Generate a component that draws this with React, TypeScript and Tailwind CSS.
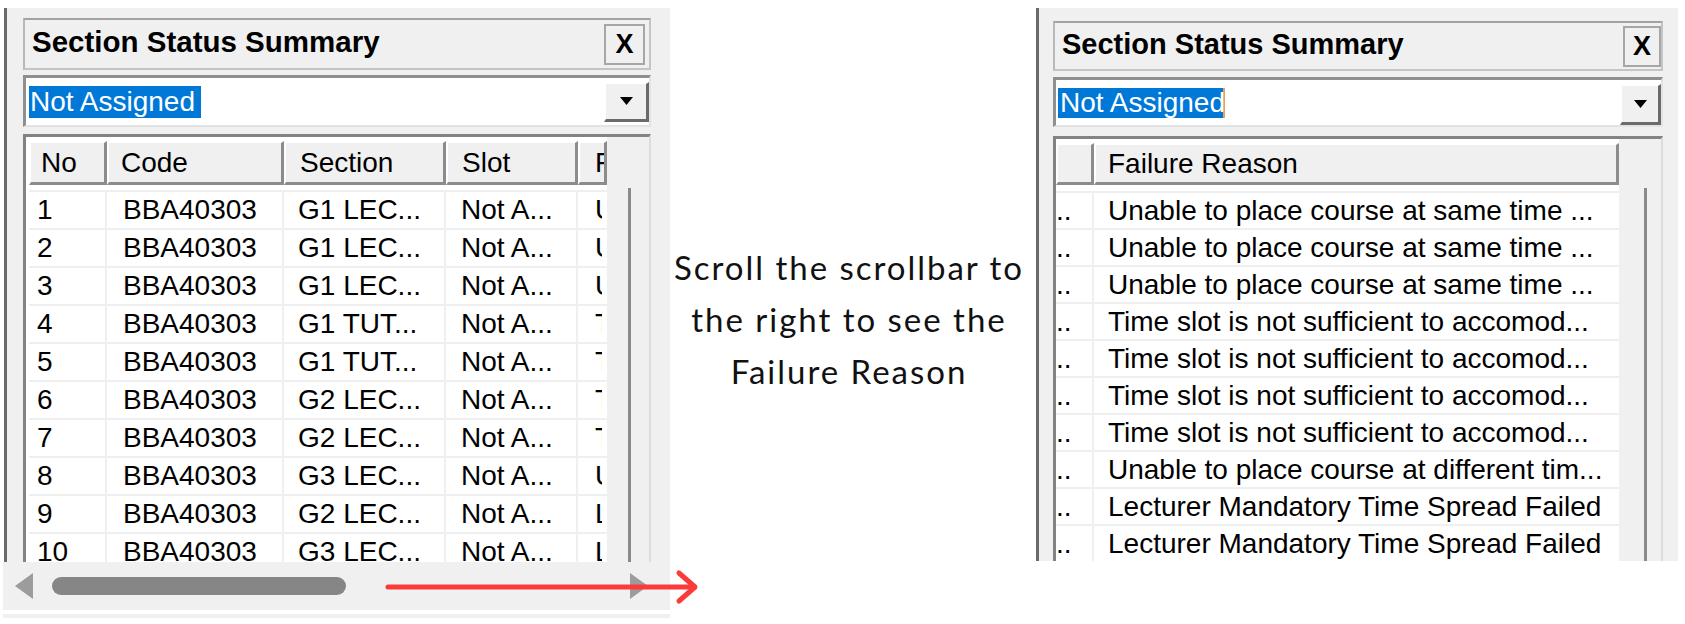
import React from "react";

const leftRows: string[][] = [
  ["1", "BBA40303", "G1 LEC...", "Not A...", "Unable"],
  ["2", "BBA40303", "G1 LEC...", "Not A...", "Unable"],
  ["3", "BBA40303", "G1 LEC...", "Not A...", "Unable"],
  ["4", "BBA40303", "G1 TUT...", "Not A...", "Time"],
  ["5", "BBA40303", "G1 TUT...", "Not A...", "Time"],
  ["6", "BBA40303", "G2 LEC...", "Not A...", "Time"],
  ["7", "BBA40303", "G2 LEC...", "Not A...", "Time"],
  ["8", "BBA40303", "G3 LEC...", "Not A...", "Unable"],
  ["9", "BBA40303", "G2 LEC...", "Not A...", "Lecturer"],
  ["10", "BBA40303", "G3 LEC...", "Not A...", "Lecturer"],
];

const reasons: string[] = [
  "Unable to place course at same time ...",
  "Unable to place course at same time ...",
  "Unable to place course at same time ...",
  "Time slot is not sufficient to accomod...",
  "Time slot is not sufficient to accomod...",
  "Time slot is not sufficient to accomod...",
  "Time slot is not sufficient to accomod...",
  "Unable to place course at different tim...",
  "Lecturer Mandatory Time Spread Failed",
  "Lecturer Mandatory Time Spread Failed",
  "",
];

const LCOLS = [
  { w: "w-[78px]", hp: "pl-[10px]", bp: "pl-[8px]", label: "No", border: true },
  { w: "w-[177px]", hp: "pl-[12px]", bp: "pl-[16px]", label: "Code", border: true },
  { w: "w-[162px]", hp: "pl-[14px]", bp: "pl-[14px]", label: "Section", border: true },
  { w: "w-[132px]", hp: "pl-[14px]", bp: "pl-[15px]", label: "Slot", border: true },
  { w: "w-[29px]", hp: "pl-[15px]", bp: "pl-[17px]", label: "Failure Reason", border: false },
];

function DownTriangle() {
  return (
    <svg width="13" height="8" viewBox="0 0 13 8">
      <polygon points="0,0 13,0 6.5,8" fill="#000" />
    </svg>
  );
}

function HeaderCell({ w, pad, children }: { w: string; pad: string; children: React.ReactNode }) {
  return (
    <div
      className={`${w} ${pad} h-full shrink-0 overflow-hidden whitespace-nowrap bg-[#f0f0f0] border-t-2 border-l-2 border-r-[3px] border-b-[3px] border-t-white border-l-white border-r-[#8c8c8c] border-b-[#8c8c8c] flex items-center text-[28px]`}
    >
      {children}
    </div>
  );
}

function LeftPanel() {
  return (
    <div className="w-[670px] h-[624px] shrink-0 flex flex-col pt-[8px]">
      <div className="ml-[4px] w-[666px] h-[554px] bg-[#f0f0f0] border-l-[3px] border-l-[#6a6a6a] pl-[16px] pt-[10px] flex flex-col overflow-hidden">
        {/* Title bar */}
        <div className="w-[628px] h-[52px] shrink-0 border-2 border-t-[#a2a2a2] border-l-[#b8b8b8] border-r-[#c4c4c4] border-b-[#c4c4c4] flex items-center pl-[7px] pr-[4px]">
          <span className="text-[29.5px] font-bold whitespace-nowrap pb-[3px]">Section Status Summary</span>
          <div className="ml-auto w-[41px] h-[41px] border-2 border-[#a6a6a6] bg-[#f0f0f0] flex items-center justify-center">
            <span className="text-[27px] font-bold leading-none">X</span>
          </div>
        </div>
        {/* Combo */}
        <div className="mt-[5px] w-[628px] h-[52px] shrink-0 bg-white border-t-[3px] border-l-[3px] border-r-2 border-b-2 border-t-[#8f8f8f] border-l-[#8f8f8f] border-r-[#e3e3e3] border-b-[#e3e3e3] flex items-center">
          <div className="ml-[3px] w-[172px] h-[32px] bg-[#0078d7] text-white text-[28px] leading-[32px] pl-[1px] whitespace-nowrap">
            Not Assigned
          </div>
          <div className="ml-auto w-[45px] h-[40px] bg-[#f0f0f0] border-t-2 border-l-2 border-r-[3px] border-b-[3px] border-t-white border-l-white border-r-[#6a6a6a] border-b-[#6a6a6a] flex items-center justify-center">
            <DownTriangle />
          </div>
        </div>
        {/* Grid */}
        <div className="mt-[7px] w-[628px] flex-1 flex border-t-[3px] border-l-[3px] border-r-2 border-t-[#838383] border-l-[#838383] border-r-[#dcdcdc] overflow-hidden">
          <div className="w-[581px] shrink-0 bg-white pl-[3px] pt-[4px] flex flex-col">
            <div className="flex h-[44px] shrink-0">
              {LCOLS.map((c, i) => (
                <HeaderCell key={i} w={c.w} pad={c.hp}>
                  {c.label}
                </HeaderCell>
              ))}
            </div>
            <div className="pt-[5px] flex flex-col">
              {leftRows.map((r, ri) => (
                <div key={ri} className="flex h-[38px] shrink-0 border-t-2 border-t-[#efefef]">
                  {LCOLS.map((c, ci) =>
                    c.border ? (
                      <div
                        key={ci}
                        className={`${c.w} ${c.bp} shrink-0 overflow-hidden whitespace-nowrap text-[28px] leading-[36px] border-r-2 border-r-[#efefef]`}
                      >
                        {r[ci]}
                      </div>
                    ) : (
                      <div key={ci} className={`${c.w} shrink-0`}>
                        <div className="w-[24px] pl-[17px] overflow-hidden whitespace-nowrap text-[28px] leading-[36px]">
                          {r[ci]}
                        </div>
                      </div>
                    )
                  )}
                </div>
              ))}
            </div>
          </div>
          <div className="flex-1 bg-[#f0f0f0] pt-[51px] pl-[21px]">
            <div className="w-[3px] h-full bg-[#8a8a8a]" />
          </div>
        </div>
      </div>
      {/* Horizontal scrollbar */}
      <div className="ml-[3px] w-[667px] h-[48px] shrink-0 bg-[#f0f0f0] flex items-center">
        <svg className="ml-[12px]" width="18" height="26" viewBox="0 0 18 26">
          <polygon points="18,0 18,26 0,13" fill="#9c9c9c" />
        </svg>
        <div className="ml-[19px] w-[294px] h-[18px] rounded-full bg-[#868686]" />
        <svg className="ml-auto mr-[22px]" width="18" height="26" viewBox="0 0 18 26">
          <polygon points="0,0 0,26 18,13" fill="#9c9c9c" />
        </svg>
      </div>
      <div className="mt-[4px] ml-[3px] w-[667px] h-[4px] bg-[#f0f0f0]" />
    </div>
  );
}

function Middle() {
  return (
    <div className="w-[366px] h-[624px] shrink-0 flex items-center justify-center pt-[14px] pr-[8px]">
      <p className="text-center text-[33px] leading-[52px] tracking-[0.06em] text-[#111] font-['Lato','Open_Sans',sans-serif] whitespace-nowrap">
        Scroll the scrollbar to
        <br />
        the right to see the
        <br />
        Failure Reason
      </p>
    </div>
  );
}

function RightPanel() {
  return (
    <div className="w-[649px] h-[624px] shrink-0 pt-[8px]">
      <div className="w-[642px] h-[553px] bg-[#f0f0f0] border-l-[3px] border-l-[#6a6a6a] pl-[14px] pt-[13px] flex flex-col overflow-hidden">
        {/* Title bar */}
        <div className="w-[610px] h-[50px] shrink-0 border-2 border-t-[#a2a2a2] border-l-[#b8b8b8] border-r-[#c4c4c4] border-b-[#c4c4c4] flex items-center pl-[7px]">
          <span className="text-[29px] font-bold whitespace-nowrap pb-[3px]">Section Status Summary</span>
          <div className="ml-auto w-[38px] h-[41px] border-2 border-[#a6a6a6] bg-[#f0f0f0] flex items-center justify-center">
            <span className="text-[27px] font-bold leading-none">X</span>
          </div>
        </div>
        {/* Combo */}
        <div className="mt-[6px] w-[610px] h-[50px] shrink-0 bg-white border-t-[3px] border-l-[3px] border-r-2 border-b-2 border-t-[#8f8f8f] border-l-[#8f8f8f] border-r-[#e3e3e3] border-b-[#e3e3e3] flex items-center">
          <div className="ml-[2px] w-[167px] h-[30px] bg-[#0078d7] text-white text-[28px] leading-[30px] pl-[2px] whitespace-nowrap border-r-2 border-r-[#e8a060]">
            Not Assigned
          </div>
          <div className="ml-auto self-end w-[41px] h-[41px] bg-[#f0f0f0] border-t-2 border-l-2 border-r-[3px] border-b-[3px] border-t-white border-l-white border-r-[#6a6a6a] border-b-[#6a6a6a] flex items-center justify-center">
            <DownTriangle />
          </div>
        </div>
        {/* Grid */}
        <div className="mt-[9px] w-[610px] flex-1 flex border-t-[3px] border-l-[3px] border-r-2 border-t-[#838383] border-l-[#838383] border-r-[#dcdcdc] overflow-hidden">
          <div className="w-[563px] shrink-0 bg-white pt-[4px] flex flex-col">
            <div className="flex h-[42px] shrink-0">
              <HeaderCell w="w-[38px]" pad="pl-[0px]">
                {""}
              </HeaderCell>
              <HeaderCell w="w-[525px]" pad="pl-[12px]">
                Failure Reason
              </HeaderCell>
            </div>
            <div className="pt-[6px] flex flex-col">
              {reasons.map((t, i) => (
                <div key={i} className="flex h-[37px] shrink-0 border-t-2 border-t-[#efefef]">
                  <div className="w-[38px] shrink-0 overflow-hidden whitespace-nowrap text-[28px] leading-[35px] pl-[0px] border-r-2 border-r-[#efefef]">
                    ..
                  </div>
                  <div className="w-[525px] shrink-0 overflow-hidden whitespace-nowrap text-[28px] leading-[35px] pl-[14px]">
                    {t}
                  </div>
                </div>
              ))}
            </div>
          </div>
          <div className="flex-1 bg-[#f0f0f0] pt-[49px] pl-[25px]">
            <div className="w-[3px] h-full bg-[#8a8a8a]" />
          </div>
        </div>
      </div>
    </div>
  );
}

function RedArrow() {
  return (
    <svg className="absolute left-[380px] top-[566px]" width="330" height="44" viewBox="0 0 330 44">
      <line x1="8" y1="21" x2="314" y2="21" stroke="#fb3a3a" strokeWidth="5" strokeLinecap="round" />
      <polyline
        points="299,7 315,21 299,35"
        fill="none"
        stroke="#fb3a3a"
        strokeWidth="5"
        strokeLinecap="round"
        strokeLinejoin="round"
      />
    </svg>
  );
}

export default function App() {
  return (
    <div className="relative w-[1685px] h-[624px] overflow-hidden bg-white flex font-['Liberation_Sans',Arial,sans-serif] text-black">
      <LeftPanel />
      <Middle />
      <RightPanel />
      <RedArrow />
    </div>
  );
}
